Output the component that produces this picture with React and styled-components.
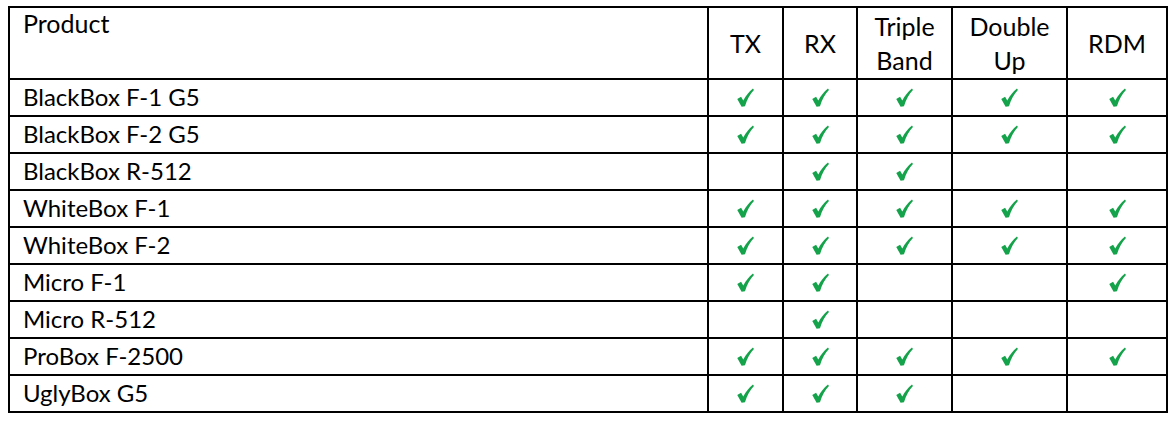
import React from "react";
import styled, { createGlobalStyle } from "styled-components";

const GlobalStyle = createGlobalStyle`
	body {
		margin: 0;
		background: #ffffff;
		font-family: Lato, "Open Sans", sans-serif;
		color: #000000;
	}
`;

const features = ["TX", "RX", "Triple Band", "Double Up", "RDM"];

// which features each product supports, in the order of the columns above
const products = [
	{ name: "BlackBox F-1 G5", has: [1, 1, 1, 1, 1] },
	{ name: "BlackBox F-2 G5", has: [1, 1, 1, 1, 1] },
	{ name: "BlackBox R-512", has: [0, 1, 1, 0, 0] },
	{ name: "WhiteBox F-1", has: [1, 1, 1, 1, 1] },
	{ name: "WhiteBox F-2", has: [1, 1, 1, 1, 1] },
	{ name: "Micro F-1", has: [1, 1, 0, 0, 1] },
	{ name: "Micro R-512", has: [0, 1, 0, 0, 0] },
	{ name: "ProBox F-2500", has: [1, 1, 1, 1, 1] },
	{ name: "UglyBox G5", has: [1, 1, 1, 0, 0] },
];

const colWidths = [699, 75, 74, 95, 115, 100];

const Tick = () => (
	<TickSvg viewBox="0 0 16 18" aria-label="yes">
		<path d="M0.2 10.4 L3.8 8.3 L5.9 11.8 C8.3 7.3 11.3 3.5 15.1 0.4 L16 1.9 C12.3 5.7 9.6 10.4 7.5 17.4 L4.3 17.7 Z" />
	</TickSvg>
);

const App = () => {
	return (
		<Page>
			<GlobalStyle />
			<Table>
				<colgroup>
					{colWidths.map((w, i) => (
						<col key={i} style={{ width: w }} />
					))}
				</colgroup>
				<thead>
					<HeadRow>
						<ProductHead>Product</ProductHead>
						{features.map((f) => (
							<FeatureHead key={f}>
								{f.split(" ").map((word, i) => (
									<Word key={i}>{word}</Word>
								))}
							</FeatureHead>
						))}
					</HeadRow>
				</thead>
				<tbody>
					{products.map((p) => (
						<Row key={p.name}>
							<NameCell>{p.name}</NameCell>
							{p.has.map((ok, i) => (
								<CheckCell key={i}>{ok ? <Tick /> : null}</CheckCell>
							))}
						</Row>
					))}
				</tbody>
			</Table>
		</Page>
	);
};

export default App;

const Page = styled.div`
	padding: 6px 0 0 8px;
`;

const Table = styled.table`
	border-collapse: collapse;
	table-layout: fixed;
	width: 1158px;
	border: 2px solid #000;
`;

const HeadRow = styled.tr`
	height: 72px;
`;

const Row = styled.tr`
	height: 37px;
`;

const Cell = styled.td`
	border: 2px solid #000;
	padding: 0;
	font-size: 24px;
	line-height: 27px;
`;

const ProductHead = styled(Cell).attrs({ as: "th" })`
	text-align: left;
	vertical-align: top;
	font-weight: 400;
	font-size: 25px;
	padding: 2px 13px 0;
`;

const FeatureHead = styled(Cell).attrs({ as: "th" })`
	text-align: center;
	vertical-align: middle;
	font-weight: 400;
	font-size: 25px;
	line-height: 34px;
	padding-bottom: 1px;
`;

const Word = styled.span`
	display: block;
`;

const NameCell = styled(Cell)`
	padding: 0 13px 2px;
`;

const CheckCell = styled(Cell)`
	text-align: center;
	vertical-align: middle;
	line-height: 0;
`;

const TickSvg = styled.svg`
	width: 17px;
	height: 19px;
	fill: #14a34a;
`;
